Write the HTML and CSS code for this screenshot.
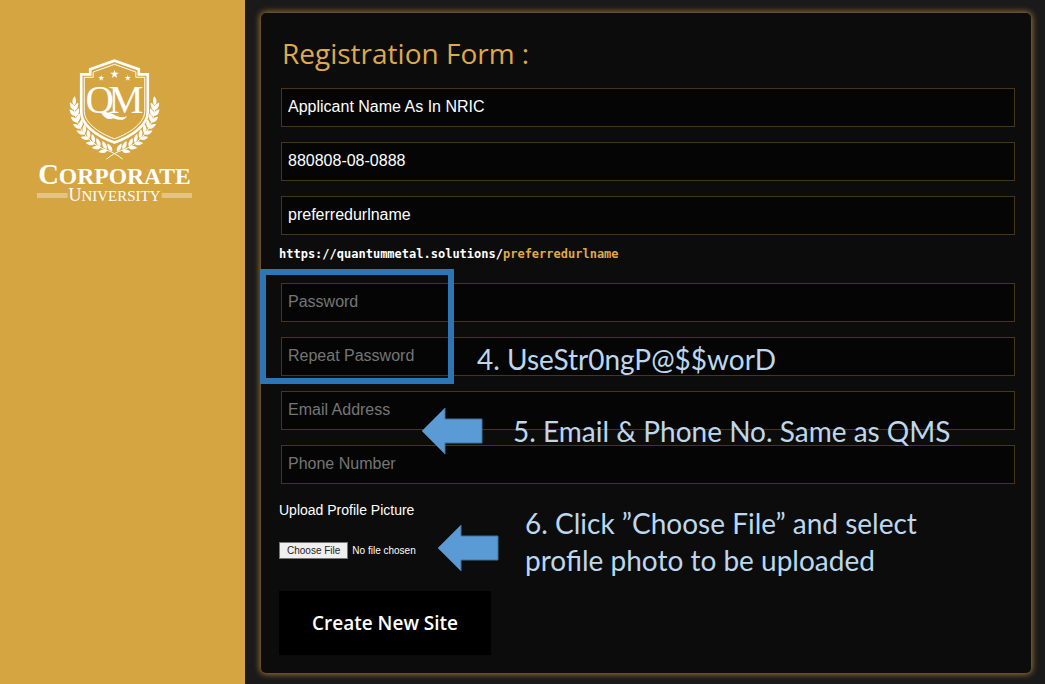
FILE: index.html
```html
<!DOCTYPE html>
<html lang="en">

<head>
  <meta charset="UTF-8" />
  <meta name="viewport" content="width=device-width, initial-scale=1.0" />
  <title>Registration Form</title>
  <link rel="stylesheet" href="styles.css">
</head>

<body>
  <div class="page">
    <aside class="sidebar">
      <svg class="logo" viewBox="48 38 472 438" role="img" aria-label="QM Corporate University">
        <defs>
          <path id="leaf" d="M0 0C5 -8 16 -9 27 -1C17 6 6 6 0 0Z" />
          <path id="star" d="M0 -13L3 -4L13 -4L5 2L8 12L0 6L-8 12L-5 2L-13 -4L-3 -4Z" />
          <g id="branch">
            <path d="M163 190C168 248 208 296 258 314C278 320 296 332 308 342" fill="none" stroke="#fff" stroke-width="3" />
            <use href="#leaf" transform="translate(163 180) rotate(-85)" />
            <use href="#leaf" transform="translate(165 194) rotate(-122)" />
            <use href="#leaf" transform="translate(163 197) rotate(-62)" />
            <use href="#leaf" transform="translate(167 212) rotate(-130)" />
            <use href="#leaf" transform="translate(167 214) rotate(-66)" />
            <use href="#leaf" transform="translate(174 231) rotate(-140)" />
            <use href="#leaf" transform="translate(172 231) rotate(-72)" />
            <use href="#leaf" transform="translate(183 249) rotate(-150)" />
            <use href="#leaf" transform="translate(182 248) rotate(-80)" />
            <use href="#leaf" transform="translate(195 266) rotate(-158)" />
            <use href="#leaf" transform="translate(194 264) rotate(-88)" />
            <use href="#leaf" transform="translate(209 281) rotate(-166)" />
            <use href="#leaf" transform="translate(208 279) rotate(-96)" />
            <use href="#leaf" transform="translate(225 295) rotate(-174)" />
            <use href="#leaf" transform="translate(224 292) rotate(-104)" />
            <use href="#leaf" transform="translate(243 306) rotate(-182)" />
            <use href="#leaf" transform="translate(241 303) rotate(-112)" />
            <use href="#leaf" transform="translate(262 315) rotate(-190)" />
            <use href="#leaf" transform="translate(260 312) rotate(-114)" />
            <use href="#leaf" transform="translate(277 318) rotate(-120)" />
          </g>
        </defs>
        <g fill="#fff">
          <use href="#branch" />
          <use href="#branch" transform="translate(568 0) scale(-1 1)" />
          <path class="shield" stroke-width="8" d="M284 46L357 72V87H384V200C384 238 340 272 284 292C228 272 184 238 184 200V87H211V72Z" />
          <path class="shield" stroke-width="3" d="M284 57L348 80V96H375V198C375 230 336 262 284 281C232 262 193 230 193 198V96H220V80Z" />
          <use href="#star" transform="translate(284 86)" />
          <use href="#star" transform="translate(244 98) scale(.7)" />
          <use href="#star" transform="translate(324 98) scale(.7)" />
          <text class="monogram" x="197" y="203">Q<tspan dx="-16">M</tspan></text>
          <path d="M238 202C262 206 276 224 302 224C312 224 318 219 322 212C310 219 298 216 286 210C270 202 256 198 238 202Z" />
          <text class="word" x="284" y="416" text-anchor="middle">C<tspan class="word_small">ORPORATE</tspan></text>
          <text class="sub" x="284" y="467" text-anchor="middle">U<tspan class="sub_small">NIVERSITY</tspan></text>
          <path opacity=".35" d="M51 444H143V459H51ZM426 444H517V459H426Z" />
        </g>
      </svg>
    </aside>

    <main class="content">
      <form class="form_card" action="#" method="post">
        <h1 class="heading">Registration Form :</h1>

        <input class="input_field" type="text" name="name" aria-label="Applicant name" value="Applicant Name As In NRIC" />
        <input class="input_field" type="text" name="nric" aria-label="NRIC" value="880808-08-0888" />
        <input class="input_field" type="text" name="url" aria-label="Preferred URL name" value="preferredurlname" />

        <p class="site_url">https://quantummetal.solutions/<span>preferredurlname</span></p>

        <div class="passwords">
          <input class="input_field" type="password" name="password" aria-label="Password" placeholder="Password" />
          <input class="input_field" type="password" name="repeat" aria-label="Repeat Password" placeholder="Repeat Password" />
          <div class="highlight"></div>
          <p class="note note_password">4. UseStr0ngP@$$worD</p>
        </div>

        <div class="contact">
          <input class="input_field" type="email" name="email" aria-label="Email Address" placeholder="Email Address" />
          <input class="input_field" type="tel" name="phone" aria-label="Phone Number" placeholder="Phone Number" />
          <div class="callout callout_contact">
            <svg class="arrow" viewBox="0 0 62 48"><path d="M1 24L24 1V12H61V36H24V47Z" /></svg>
            <p class="note">5. Email &amp; Phone No. Same as QMS</p>
          </div>
        </div>

        <div class="upload">
          <label for="photo">Upload Profile Picture</label>
          <input class="file_field" type="file" id="photo" name="photo" />
          <div class="callout callout_upload">
            <svg class="arrow" viewBox="0 0 62 48"><path d="M1 24L24 1V12H61V36H24V47Z" /></svg>
            <p class="note">6. Click ”Choose File” and select<br />profile photo to be uploaded</p>
          </div>
        </div>

        <button class="submit_button" type="submit">Create New Site</button>
      </form>
    </main>
  </div>
</body>

</html>
```
FILE: styles.css
```css
* {
  box-sizing: border-box;
}

body {
  margin: 0;
  background-color: #1a1a1a;
  color: #fff;
  font-family: "Liberation Sans", Arial, sans-serif;
}

.page {
  display: flex;
  min-height: 100vh;
}

.sidebar {
  flex: 0 0 245px;
  padding: 58px 52px 0 36px;
  background-color: #d5a542;
}

.logo {
  display: block;
  width: 100%;
}

.shield {
  fill: none;
  stroke: #fff;
}

.monogram,
.word,
.sub {
  font-family: "Liberation Serif", serif;
}

.monogram {
  font-size: 118px;
}

.word {
  font-size: 86px;
  font-weight: 700;
}

.word_small {
  font-size: 71px;
}

.sub {
  font-size: 54px;
}

.sub_small {
  font-size: 45px;
}

.content {
  flex: 1;
  padding: 13px 14px 11px 16px;
}

.form_card {
  display: flex;
  flex-direction: column;
  gap: 15px;
  min-height: 660px;
  padding: 20px 16px 16px 20px;
  background-color: #0c0c0c;
  border-radius: 5px;
  box-shadow: 0 0 6px 1px #a67c3a;
}

.heading {
  margin: 0;
  padding-left: 1px;
  font-family: "Open Sans", sans-serif;
  font-size: 28px;
  font-weight: 400;
  line-height: 40px;
  color: #dfa94b;
}

.input_field {
  display: block;
  width: 100%;
  height: 39px;
  padding: 0 6px 2px;
  border: 1px solid #46361c;
  outline: none;
  background-color: #050505;
  color: #fff;
  font-family: inherit;
  font-size: 16px;
}

.input_field::placeholder {
  color: #757575;
}

.site_url {
  margin: -5px 0 5px -2px;
  font-family: "DejaVu Sans Mono", monospace;
  font-size: 12px;
  font-weight: 700;
  line-height: 18px;
}

.site_url span {
  color: #dfa94b;
}

.passwords,
.contact,
.upload {
  position: relative;
  display: flex;
  flex-direction: column;
  gap: 15px;
}

.highlight {
  position: absolute;
  top: -14px;
  left: -21px;
  width: 194px;
  height: 115px;
  border: 6px solid #2e75b6;
}

.note {
  margin: 0;
  font-family: Lato, sans-serif;
  font-size: 28px;
  line-height: 37px;
  color: #bdd7ee;
  white-space: nowrap;
}

.note_password {
  position: absolute;
  top: 58px;
  left: 196px;
}

.callout {
  position: absolute;
  display: flex;
  align-items: center;
  gap: 30px;
}

.callout_contact {
  top: 16px;
  left: 140px;
}

.callout_upload {
  top: 6px;
  left: 158px;
  gap: 26px;
}

.callout_upload .arrow {
  margin-top: 12px;
}

.arrow {
  width: 62px;
  height: 48px;
  fill: #5b9bd5;
  stroke: #41719c;
}

.upload {
  align-items: flex-start;
  gap: 24px;
  padding-top: 3px;
  margin-left: -2px;
  font-size: 14px;
  line-height: 16px;
}

.file_field {
  height: 18px;
  width: 150px;
  font-family: inherit;
  font-size: 10px;
  line-height: 14px;
}

.file_field::file-selector-button {
  height: 17px;
  margin: 0 4px 0 0;
  padding: 0 7px;
  border: 1px solid #767676;
  background-color: #efefef;
  color: #222;
  font-family: inherit;
  font-size: 10px;
}

.submit_button {
  align-self: flex-start;
  margin: 16px 0 0 -2px;
  padding: 18px 33px;
  border: 0;
  background-color: #000;
  color: #fff;
  font-family: "Open Sans", sans-serif;
  font-size: 19px;
  font-weight: 600;
  line-height: 28px;
}
```
